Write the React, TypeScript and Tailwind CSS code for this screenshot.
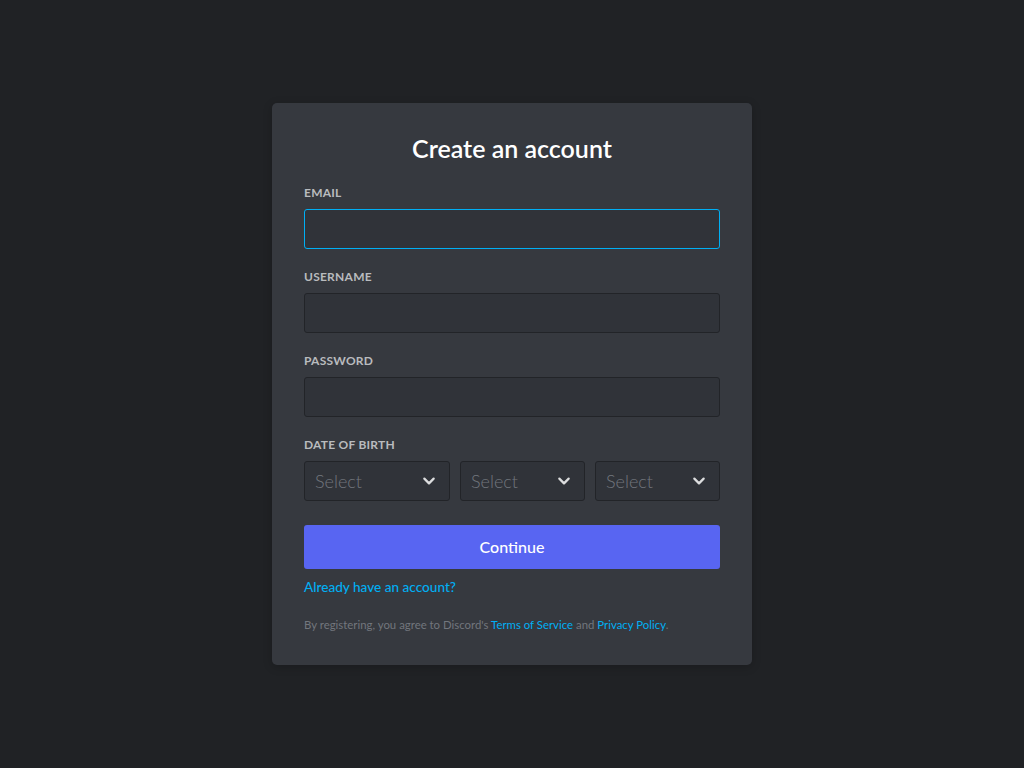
import React from "react";

const font = { fontFamily: 'Lato, "Noto Sans", sans-serif' };

const Field = ({
  label,
  focused = false,
  first = false,
}: {
  label: string;
  focused?: boolean;
  first?: boolean;
}) => (
  <div className={first ? "mt-[22px]" : "mt-5"}>
    <label className="block text-[12px] leading-4 font-bold tracking-[0.02em] uppercase text-[#b9bbbe] mb-2">
      {label}
    </label>
    <input
      className={`block w-full h-10 rounded-[3px] bg-[#303339] px-2.5 text-[16px] text-[#dcddde] outline-none border ${
        focused ? "border-[#00aff4]" : "border-[#222428]"
      }`}
    />
  </div>
);

const SelectBox = ({ width }: { width: string }) => (
  <div
    className={`${width} h-10 flex items-center justify-between rounded-[3px] bg-[#303339] border border-[#222428] pl-2.5 pr-3`}
  >
    <span className="text-[18px] font-light text-[#72767d]">Select</span>
    <svg width="16" height="16" viewBox="0 0 24 24" fill="none">
      <path
        d="M5 8.5l7 7 7-7"
        stroke="#dcddde"
        strokeWidth="3.4"
        strokeLinecap="round"
        strokeLinejoin="round"
      />
    </svg>
  </div>
);

export default function App() {
  return (
    <div className="min-h-[768px] w-full bg-[#202225] flex justify-center pt-[103px]" style={font}>
      <div className="w-[480px] h-[562px] bg-[#36393f] rounded-[5px] p-8 shadow-[0_2px_10px_0_rgba(0,0,0,0.2)]">
        <h1 className="-mt-[2px] text-center text-[25px] leading-[30px] font-semibold text-white">
          Create an account
        </h1>
        <Field label="Email" focused first />
        <Field label="Username" />
        <Field label="Password" />
        <div className="mt-5">
          <div className="text-[12px] leading-4 font-bold tracking-[0.02em] uppercase text-[#b9bbbe] mb-2">
            Date of Birth
          </div>
          <div className="flex gap-2.5">
            <SelectBox width="w-[146px]" />
            <SelectBox width="w-[125px]" />
            <SelectBox width="w-[125px]" />
          </div>
        </div>
        <button className="mt-6 w-full h-11 rounded-[3px] bg-[#5865f2] text-white text-[16px] font-medium">
          Continue
        </button>
        <div className="mt-2 text-[13.6px] leading-5 font-medium text-[#00aff4]">Already have an account?</div>
        <p className="mt-5 text-[11.4px] leading-4 text-[#72767d]">
          By registering, you agree to Discord's{" "}
          <span className="text-[#00aff4]">Terms of Service</span> and{" "}
          <span className="text-[#00aff4]">Privacy Policy</span>.
        </p>
      </div>
    </div>
  );
}
